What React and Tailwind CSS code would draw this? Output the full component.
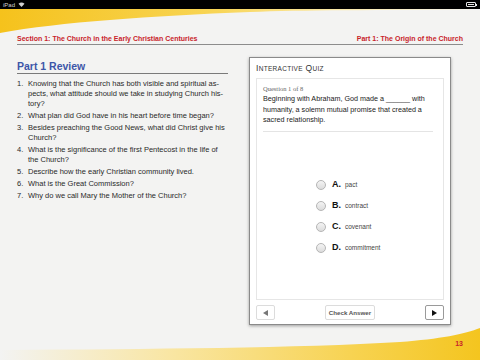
import React from 'react';

const questions = [
    ['Knowing that the Church has both visible and spiritual as-', 'pects, what attitude should we take in studying Church his-', 'tory?'],
    ['What plan did God have in his heart before time began?'],
    ['Besides preaching the Good News, what did Christ give his', 'Church?'],
    ['What is the significance of the first Pentecost in the life of', 'the Church?'],
    ['Describe how the early Christian community lived.'],
    ['What is the Great Commission?'],
    ['Why do we call Mary the Mother of the Church?'],
];

const options = [
    { letter: 'A.', text: 'pact' },
    { letter: 'B.', text: 'contract' },
    { letter: 'C.', text: 'covenant' },
    { letter: 'D.', text: 'commitment' },
];

const StatusBar = () => (
    <div className="h-[9px] bg-black flex items-center justify-between px-[3px]">
        <div className="flex items-center gap-[3px] text-[6px] leading-none text-[#d0d0d0]">
            <span>iPad</span>
            <svg width="7" height="5" viewBox="0 0 7 5">
                <path d="M0.5 1.8 Q3.5 -0.8 6.5 1.8 L3.5 5 Z" fill="#d0d0d0" />
            </svg>
        </div>
        <div className="flex items-center">
            <div className="w-[10px] h-[5px] border border-[#e5e5e5] rounded-[1px] p-[1px]">
                <div className="w-full h-full bg-[#e5e5e5]" />
            </div>
            <div className="w-[1px] h-[2px] bg-[#e5e5e5]" />
        </div>
    </div>
);

const App = () => {
    return (
        <div className="relative w-[480px] h-[360px] overflow-hidden bg-[#f3f3f2] font-['Liberation_Sans',Arial,sans-serif]">
            {/* decorative swooshes */}
            <svg className="absolute left-0 top-[9px]" width="480" height="26" viewBox="0 0 480 26">
                <defs>
                    <linearGradient id="topg" x1="0" x2="1" y1="0" y2="0">
                        <stop offset="0" stopColor="#f5c21c" />
                        <stop offset="0.45" stopColor="#f8d556" />
                        <stop offset="0.7" stopColor="#fbe9a8" />
                        <stop offset="1" stopColor="#f3f3f2" />
                    </linearGradient>
                </defs>
                <path d="M0 0 H480 V1 C380 1 300 1 250 3 C150 7 60 13 0 24 Z" fill="url(#topg)" />
            </svg>
            <svg className="absolute left-0 bottom-0" width="480" height="32" viewBox="0 0 480 32">
                <defs>
                    <linearGradient id="botg" x1="0" x2="1" y1="0" y2="0">
                        <stop offset="0" stopColor="#f3f3f2" />
                        <stop offset="0.35" stopColor="#f9e6a4" />
                        <stop offset="0.75" stopColor="#f7d24e" />
                        <stop offset="1" stopColor="#f4c51f" />
                    </linearGradient>
                </defs>
                <path d="M0 22 C150 21 300 20 400 14 C440 11 465 6 480 0 V32 H0 Z" fill="url(#botg)" />
            </svg>

            <div className="relative">
                <StatusBar />

                <div className="mx-[17px] mt-[25px] flex justify-between border-b border-[#8c8c8c] pb-[1px] text-[7px] leading-[9px] font-bold text-[#c8232b]">
                    <span>Section 1: The Church in the Early Christian Centuries</span>
                    <span>Part 1: The Origin of the Church</span>
                </div>

                <div className="flex mt-[15px] pl-[17px]">
                    <div className="w-[211px]">
                        <h1 className="text-[10.5px] leading-[12px] font-bold text-[#3d56a8] border-b border-[#7a7a7a] pb-[1px]">
                            Part 1 Review
                        </h1>
                        <ol className="mt-[5px] text-[7.5px] leading-[10px] text-[#2a2a2a]">
                            {questions.map((lines, i) => (
                                <li key={i} className="flex mb-[2px]">
                                    <span className="w-[11px] shrink-0">{i + 1}.</span>
                                    <span>
                                        {lines.map((l, j) => (
                                            <span key={j} className="block whitespace-nowrap">{l}</span>
                                        ))}
                                    </span>
                                </li>
                            ))}
                        </ol>
                    </div>

                    <div className="ml-[21px] -mt-[3px] w-[202px] h-[268px] bg-white border border-[#8a8a8a] shadow-[0_1px_3px_rgba(0,0,0,0.35)] px-[6px] flex flex-col">
                        <div className="h-[20px] flex items-center text-[8.5px] tracking-[0.3px] text-[#333]">
                            <span>I<span className="text-[6.5px]">NTERACTIVE</span> Q<span className="text-[6.5px]">UIZ</span></span>
                        </div>
                        <div className="h-[222px] border border-[#e6e6e6] px-[6px] pt-[6px] flex flex-col">
                            <div className="font-['Liberation_Serif',serif] text-[6.5px] leading-[8px] text-[#666]">Question 1 of 8</div>
                            <p className="text-[7.2px] leading-[10.5px] text-[#222] mt-[1px]">
                                Beginning with Abraham, God made a ______ with<br />
                                humanity, a solemn mutual promise that created a<br />
                                sacred relationship.
                            </p>
                            <div className="mt-[5px] mr-[4px] border-b border-[#e4e4e4]" />
                            <div className="mt-[48px] ml-[53px] flex flex-col gap-[11px]">
                                {options.map((o) => (
                                    <div key={o.letter} className="flex items-center h-[10px]">
                                        <div className="w-[10px] h-[10px] rounded-full border border-[#b5b5b5] bg-gradient-to-b from-[#f4f4f4] to-[#dcdcdc]" />
                                        <span className="ml-[6px] w-[13px] text-[9px] font-bold text-[#111]">{o.letter}</span>
                                        <span className="text-[6.5px] text-[#444] mt-[1px]">{o.text}</span>
                                    </div>
                                ))}
                            </div>
                        </div>
                        <div className="mt-[5px] flex items-center justify-between">
                            <div className="w-[19px] h-[15px] border border-[#dcdcdc] rounded-[2px] flex items-center justify-center">
                                <svg width="5" height="6" viewBox="0 0 5 6"><path d="M5 0 V6 L0 3 Z" fill="#777" /></svg>
                            </div>
                            <div className="w-[50px] h-[15px] border border-[#dcdcdc] rounded-[2px] flex items-center justify-center text-[6.2px] font-bold text-[#555]">
                                Check Answer
                            </div>
                            <div className="w-[19px] h-[15px] border border-[#9a9a9a] rounded-[2px] flex items-center justify-center">
                                <svg width="5" height="6" viewBox="0 0 5 6"><path d="M0 0 V6 L5 3 Z" fill="#111" /></svg>
                            </div>
                        </div>
                    </div>
                </div>
            </div>

            <div className="absolute right-[17px] bottom-[11px] text-[7px] font-bold text-[#c8232b]">13</div>
        </div>
    );
};

export default App;
